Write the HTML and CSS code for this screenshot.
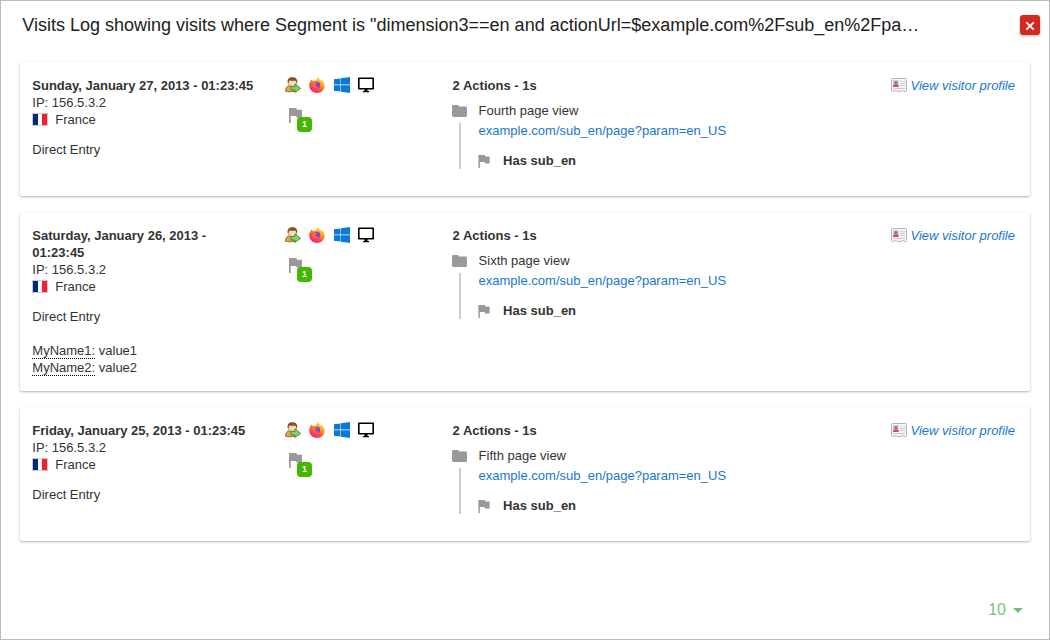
FILE: index.html
```
<!DOCTYPE html>
<html lang="en">
<head>
<meta charset="utf-8">
<title>Visits Log</title>
<link rel="stylesheet" href="styles.css">
</head>
<body>
<svg class="sprite" aria-hidden="true">
  <symbol id="visitor" viewBox="0 0 16 16">
    <path d="M.6 14.200C.4 11 2 8.800 5 8.800s5 1.500 5 5.400c-2.500.7-7.500.7-9.400 0z" fill="#eaa53c" stroke="#9a5a1c" stroke-width=".9"/>
    <path d="M4 9.300l2 3.200 2.500-3z" fill="#7fb4ea"/>
    <path d="M3.300 4.500c0 3.300 1.500 5.200 4.200 5.200s4.200-1.900 4.200-5.200L10.500 2h-6z" fill="#fbd9b5" stroke="#9a6a40" stroke-width=".7"/>
    <path d="M2.800 6.200C2 2 4 .3 7.400.3s5.400 1.700 4.700 5.900c-.8-.7-1-1.700-1.400-2.500C8.700 4 6 3.800 4.300 3.400 3.900 4.400 3.700 5.500 2.800 6.200z" fill="#85522a"/>
    <path d="M6 9.400h4V6.800l5.500 4.600-5.500 4.100V13H6z" fill="#8fcb68" stroke="#3d8a2c" stroke-width=".9"/>
  </symbol>
  <symbol id="firefox" viewBox="0 0 16 16">
    <defs>
      <linearGradient id="flame" x1=".85" y1="0" x2=".2" y2="1"><stop offset=".1" stop-color="#ffe23c"/><stop offset=".4" stop-color="#ff9527"/><stop offset=".65" stop-color="#ff4b3e"/><stop offset="1" stop-color="#e8208b"/></linearGradient>
    </defs>
    <path d="M2.600 2.500l1.300 1.700C5 3.600 6 3.500 7 3.700 7.300 2.200 8.300.8 9.500.2c.2 1.800 1.500 2.500 2.700 3.800 0-.5-.1-1-.4-1.500 2.400 1.200 3.900 3.300 3.900 6.200 0 4.100-3.400 7.200-7.700 7.200S.3 12.700.3 8.500C.3 6.200 1 4 2.600 2.500z" fill="url(#flame)"/>
    <circle cx="8" cy="8" r="3.200" fill="#8541d3"/>
    <path d="M3.500 5.500c1.300-.6 2.500-.3 3.300.3l1.700.2c0 .7-1.500 1-2 1.500-.6 1.500.8 2.600 3 2-.7 1.800-3.200 2.300-4.500 1.200C3.700 9.500 3 8 3.500 5.500z" fill="#ff6a35"/>
  </symbol>
  <symbol id="windows" viewBox="0 0 16 16">
    <path d="M0 2.300L6.500 1.400v6.200H0zM7 1.300L16 0v7.600H7zM0 8.200h6.500v6.400L0 13.700zM7 8.200H16V16l-9-1.300z" fill="#0b78d7"/>
  </symbol>
  <symbol id="desktop" viewBox="0 0 16 16">
    <path d="M.8 1.300h14.400v10.400H.8z" fill="#fff" stroke="#000" stroke-width="1.600" stroke-linejoin="round"/>
    <path d="M6.500 12h3v2H11v1.300H5V14h1.500z" fill="#000"/>
  </symbol>
  <symbol id="flag" viewBox="0 0 13 15">
    <path d="M0 0h7.400l.5 1.800H13v8H7.700l-.5-1.700H1.700V15H0z" fill="#999"/>
  </symbol>
  <symbol id="folder" viewBox="0 0 15 12">
    <path d="M1.400 0h4.500l1.500 1.600h6.200Q15 1.600 15 3v7.600Q15 12 13.600 12H1.400Q0 12 0 10.600V1.400Q0 0 1.400 0z" fill="#999"/>
  </symbol>
  <symbol id="card" viewBox="0 0 16 14">
    <path d="M1.500.5h13q1 0 1 1v11q0 1-1 1H13l-.7-1h-1.600l-.7 1H6l-.7-1H3.700l-.7 1H1.500q-1 0-1-1v-11q0-1 1-1z" fill="#f5f5f5" stroke="#b4b4b4"/>
    <path d="M2 2h5.800v7H2z" fill="#c2d2e4"/>
    <path d="M2 9c0-2.200 1-2.800 2.900-2.800S7.800 6.800 7.800 9z" fill="#e4473f"/>
    <circle cx="4.900" cy="4.700" r="1.700" fill="#a07568"/>
    <path d="M9 3.500h2m1 0h2M9 5.500h5M9 7.500h5M2.500 10.500H14" stroke="#ccc"/>
  </symbol>
</svg>

<main class="popover">
  <header class="popover-header">
    <h1 class="title">Visits Log showing visits where Segment is "dimension3==en and actionUrl=$example.com%2Fsub_en%2Fpa…</h1>
    <button class="close" aria-label="Close"><svg class="close-icon" viewBox="0 0 10 10"><path d="M1.300 1.300l7.400 7.400M8.700 1.300L1.300 8.700"/></svg></button>
  </header>

  <section class="visits">
    <article class="visit">
      <div class="details">
        <strong class="date">Sunday, January 27, 2013 - 01:23:45</strong>
        <span>IP: 156.5.3.2</span>
        <span class="country"><i class="france"></i>France</span>
        <span class="referrer">Direct Entry</span>
      </div>
      <div class="icons">
        <div class="icon-row"><svg class="icon"><use href="#visitor"/></svg><svg class="icon"><use href="#firefox"/></svg><svg class="icon"><use href="#windows"/></svg><svg class="icon"><use href="#desktop"/></svg></div>
        <div class="goal"><svg class="goal-flag"><use href="#flag"/></svg><span class="badge">1</span></div>
      </div>
      <div class="actions">
        <strong>2 Actions - 1s</strong>
        <div class="page"><svg class="folder"><use href="#folder"/></svg><span>Fourth page view</span></div>
        <div class="branch">
          <a class="url">example.com/sub_en/page?param=en_US</a>
          <div class="conversion"><svg class="small-flag"><use href="#flag"/></svg><strong>Has sub_en</strong></div>
        </div>
      </div>
      <a class="profile"><svg class="profile-icon"><use href="#card"/></svg>View visitor profile</a>
    </article>

    <article class="visit tall">
      <div class="details">
        <strong class="date">Saturday, January 26, 2013 - 01:23:45</strong>
        <span>IP: 156.5.3.2</span>
        <span class="country"><i class="france"></i>France</span>
        <span class="referrer">Direct Entry</span>
        <div class="variables">
          <div><span class="name">MyName1:</span> value1</div>
          <div><span class="name">MyName2:</span> value2</div>
        </div>
      </div>
      <div class="icons">
        <div class="icon-row"><svg class="icon"><use href="#visitor"/></svg><svg class="icon"><use href="#firefox"/></svg><svg class="icon"><use href="#windows"/></svg><svg class="icon"><use href="#desktop"/></svg></div>
        <div class="goal"><svg class="goal-flag"><use href="#flag"/></svg><span class="badge">1</span></div>
      </div>
      <div class="actions">
        <strong>2 Actions - 1s</strong>
        <div class="page"><svg class="folder"><use href="#folder"/></svg><span>Sixth page view</span></div>
        <div class="branch">
          <a class="url">example.com/sub_en/page?param=en_US</a>
          <div class="conversion"><svg class="small-flag"><use href="#flag"/></svg><strong>Has sub_en</strong></div>
        </div>
      </div>
      <a class="profile"><svg class="profile-icon"><use href="#card"/></svg>View visitor profile</a>
    </article>

    <article class="visit">
      <div class="details">
        <strong class="date">Friday, January 25, 2013 - 01:23:45</strong>
        <span>IP: 156.5.3.2</span>
        <span class="country"><i class="france"></i>France</span>
        <span class="referrer">Direct Entry</span>
      </div>
      <div class="icons">
        <div class="icon-row"><svg class="icon"><use href="#visitor"/></svg><svg class="icon"><use href="#firefox"/></svg><svg class="icon"><use href="#windows"/></svg><svg class="icon"><use href="#desktop"/></svg></div>
        <div class="goal"><svg class="goal-flag"><use href="#flag"/></svg><span class="badge">1</span></div>
      </div>
      <div class="actions">
        <strong>2 Actions - 1s</strong>
        <div class="page"><svg class="folder"><use href="#folder"/></svg><span>Fifth page view</span></div>
        <div class="branch">
          <a class="url">example.com/sub_en/page?param=en_US</a>
          <div class="conversion"><svg class="small-flag"><use href="#flag"/></svg><strong>Has sub_en</strong></div>
        </div>
      </div>
      <a class="profile"><svg class="profile-icon"><use href="#card"/></svg>View visitor profile</a>
    </article>
  </section>

  <footer class="limit"><span>10</span><i class="caret"></i></footer>
</main>
</body>
</html>
```

FILE: styles.css
```
* { box-sizing: border-box; }
body {
  margin: 0;
  font: 13px/17px "Liberation Sans", Arial, sans-serif;
  color: #333;
  background: #fff;
}
svg { display: block; flex: none; }
.sprite { position: absolute; width: 0; height: 0; }
.popover {
  display: flex;
  flex-direction: column;
  height: 640px;
  border: 1px solid #bbb;
  padding: 0 19px;
}
.popover-header {
  display: flex;
  justify-content: space-between;
  height: 61px;
  padding: 14px 0 0 2.300px;
  margin-right: -10px;
}
.title {
  margin: 0;
  font-size: 18px;
  font-weight: 400;
  line-height: 20px;
  color: #212121;
  white-space: nowrap;
}
.close {
  display: grid;
  place-items: center;
  width: 20px;
  height: 20px;
  padding: 0;
  border: 0;
  border-radius: 3px;
  background: #d4291f;
  box-shadow: 0 1px 3px rgba(0, 0, 0, .3);
}
.close-icon { width: 10px; height: 10px; margin-top: 2px; stroke: #fff; stroke-width: 1.900; }
.visits { display: flex; flex-direction: column; gap: 16px; }
.visit {
  display: grid;
  grid-template-columns: 252.700px 167.600px 1fr auto;
  height: 134px;
  padding: 15px 15px 0 12.300px;
  border-radius: 2px;
  background: #fff;
  box-shadow: 0 1px 3px rgba(0, 0, 0, .16), 0 1px 2px rgba(0, 0, 0, .16);
}
.tall { height: 179px; }
.details { display: flex; flex-direction: column; }
.date { max-width: 225px; }
.country { display: flex; align-items: center; gap: 7px; }
.france {
  width: 16px;
  height: 13px;
  border: 1px solid #ccc;
  background: linear-gradient(90deg, #002780 0 5px, #fff 5px 9px, #f91a35 9px);
}
.referrer { margin-top: 13px; }
.variables { margin-top: 17px; }
.name { border-bottom: 1px dotted #000; }
.icon-row { display: flex; gap: 8.400px; }
.icon { width: 16px; height: 16px; }
.goal { position: relative; width: 28px; margin: 15px 0 0 4px; }
.goal-flag { width: 13px; height: 15px; }
.badge {
  position: absolute;
  left: 8px;
  top: 9px;
  width: 15px;
  height: 15px;
  border-radius: 4px;
  background: #43b800;
  color: #fff;
  font-size: 9px;
  font-weight: 700;
  line-height: 15px;
  text-align: center;
}
.page { display: flex; align-items: center; gap: 11px; margin-top: 8px; }
.folder { width: 15px; height: 12px; margin: 0 .6px 0 -.6px; }
.branch {
  display: flow-root;
  height: 46px;
  margin: 4px 0 0 6px;
  padding-left: 18px;
  border-left: 2px solid #ccc;
}
.url { display: block; margin-top: -1px; color: #1976d2; }
.conversion { display: flex; align-items: center; gap: 12.500px; margin-top: 13px; }
.small-flag { width: 12px; height: 13px; margin: 1px .6px 0 -.6px; }
.profile { display: flex; gap: 3.300px; color: #1976d2; font-style: italic; }
.profile-icon { width: 16px; height: 14px; margin-top: 1px; }
.limit {
  display: flex;
  align-items: center;
  justify-content: flex-end;
  gap: 7px;
  margin: 60px 7px 0 0;
  color: #7cbf80;
  font-size: 16px;
  line-height: 18px;
}
.caret { border: 5px solid transparent; border-top-color: #75bb78; border-bottom: 0; }
```
